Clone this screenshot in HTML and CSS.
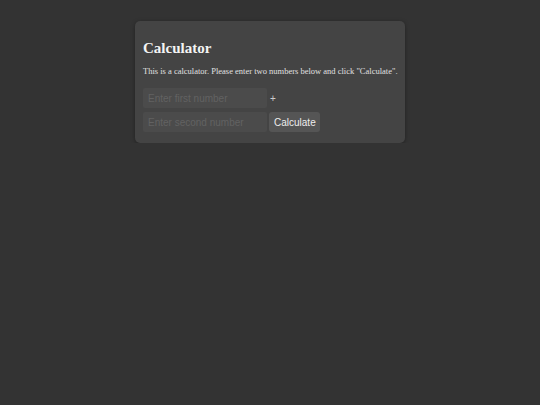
FILE: index.html
```html
<!DOCTYPE html>
<html lang="en">
<head>
<meta charset="utf-8">
<title>Calculator</title>
<link rel="stylesheet" href="styles.css">
</head>
<body>
<div class="card">
  <h1 class="title">Calculator</h1>
  <p class="intro">This is a calculator. Please enter two numbers below and click "Calculate".</p>
  <div class="form">
    <div class="row">
      <input class="field" type="text" placeholder="Enter first number">
      <span class="op">+</span>
    </div>
    <div class="row">
      <input class="field" type="text" placeholder="Enter second number">
      <button class="btn" type="button">Calculate</button>
    </div>
  </div>
</div>
</body>
</html>
```

FILE: styles.css
```css
html, body {
  margin: 0;
  padding: 0;
  background: #333333;
}
body {
  font-family: "Liberation Serif", "Times New Roman", serif;
  color: #eeeeee;
}
.card {
  width: 270px;
  box-sizing: border-box;
  margin: 21px auto 0;
  padding: 8px 8px 11px;
  background: #444444;
  border-radius: 5px;
  box-shadow: 0 1px 4px rgba(0, 0, 0, 0.35);
}
.title {
  margin: 11px 0 0;
  font-size: 15px;
  line-height: 17px;
  font-weight: bold;
  color: #f4f4f4;
}
.intro {
  margin: 9px 0 0;
  font-size: 8.5px;
  line-height: 10px;
  color: #e0e0e0;
  white-space: nowrap;
}
.form {
  margin-top: 12px;
  display: flex;
  flex-direction: column;
  gap: 4px;
}
.row {
  display: flex;
  align-items: center;
  gap: 2px;
  height: 20px;
}
.field {
  width: 124px;
  height: 20px;
  box-sizing: border-box;
  margin: 0;
  padding: 0 5px;
  border: none;
  border-radius: 2px;
  background: #4b4b4b;
  color: #eeeeee;
  font-family: "Liberation Sans", Arial, sans-serif;
  font-size: 10px;
  outline: none;
}
.field::placeholder {
  color: #626262;
}
.op {
  margin-left: 1px;
  font-family: "Liberation Sans", Arial, sans-serif;
  font-size: 10px;
  color: #cccccc;
}
.btn {
  height: 20px;
  box-sizing: border-box;
  margin: 0;
  padding: 0 4.5px 0 5px;
  border: none;
  border-radius: 3px;
  background: #555555;
  color: #eeeeee;
  font-family: "Liberation Sans", Arial, sans-serif;
  font-size: 10px;
}
```
